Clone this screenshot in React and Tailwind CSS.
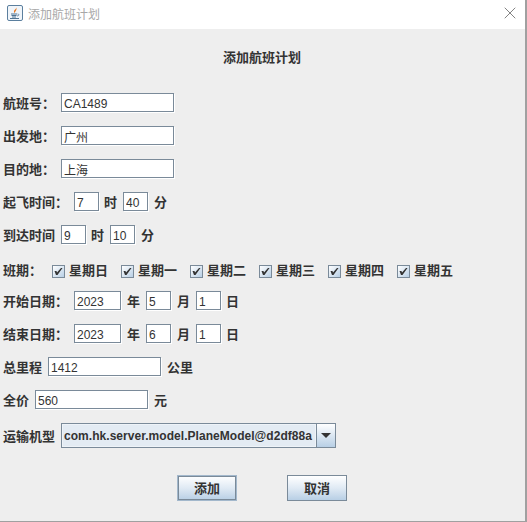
import { X } from "lucide-react";

const font = "font-['Liberation_Sans','Noto_Sans_CJK_SC',sans-serif]";

function Label({ children, className = "" }) {
  return <span className={`font-bold text-[13px] leading-[18px] text-[#333333] whitespace-nowrap ${className}`}>{children}</span>;
}

// labels next to text fields sit a little lower than the field's centre
function RowLabel({ children, className = "" }) {
  return <Label className={`pt-[2px] ${className}`}>{children}</Label>;
}

function Field({ value, className = "" }) {
  return (
    <input
      readOnly
      defaultValue={value}
      className={`h-[19px] px-[2px] pt-[2px] bg-white border border-[#7a8a99] shadow-[1px_1px_0_#ffffff] text-[12px] text-[#333333] outline-none ${className}`}
    />
  );
}

function DayCheck({ label }) {
  return (
    <label className="flex items-center gap-[4px] w-[69px] shrink-0">
      <span className="w-[13px] h-[13px] border border-[#7a8a99] bg-gradient-to-br from-[#ffffff] to-[#b8cfe5] flex items-center justify-center">
        <svg width="9" height="9" viewBox="0 0 9 9" aria-hidden="true">
          <path d="M0.5 4 L2.5 4 L3 5.5 L7 1 L8.5 1 L3.5 8 L2 8 Z" fill="#333333" />
        </svg>
      </span>
      <Label>{label}</Label>
    </label>
  );
}

function JavaIcon() {
  return (
    <svg width="16" height="16" viewBox="0 0 16 16" className="mb-[3px]" aria-hidden="true">
      <rect x="0.5" y="0.5" width="15" height="15" rx="1.5" fill="#f0f5fa" stroke="#5b7f9e" />
      <path d="M9 2 C10 4 6.5 5 7 6.8 C7.3 7.8 8 8.3 8 8.3 C7.2 6.6 10.8 5.5 9 2 Z" fill="#e8761e" />
      <path d="M4 9 H10 M4.5 10.5 H9.5 M5 12 H9" stroke="#4f7392" strokeWidth="1" />
      <path d="M10.5 9 C12.5 9 12.5 10.8 10 11" stroke="#4f7392" strokeWidth="0.8" fill="none" />
      <path d="M3 13.5 H12" stroke="#4f7392" strokeWidth="1" />
    </svg>
  );
}

function MetalButton({ children, focused }) {
  return (
    <button
      className={`w-[60px] h-[26px] pt-[2px] bg-gradient-to-b from-[#ffffff] via-[#e0eaf4] to-[#b8cfe5] font-bold text-[13px] text-[#333333] border ${
        focused ? "border-[#a3b8cc] shadow-[inset_0_0_0_1px_#7a8a99]" : "border-[#7a8a99]"
      }`}
    >
      {children}
    </button>
  );
}

const days = ["星期日", "星期一", "星期二", "星期三", "星期四", "星期五"];

export default function App() {
  return (
    <div className={`w-[527px] h-[522px] overflow-hidden flex flex-col bg-[#eeeeee] border-r-2 border-b border-[#a0a0a0] ${font}`}>
      <div className="h-[29px] shrink-0 bg-white flex items-center pl-[7px] pr-[5px]">
        <JavaIcon />
        <span className="ml-[5px] text-[12px] text-[#a8a8a8]">添加航班计划</span>
        <X className="ml-auto mb-[3px] w-[20px] h-[20px] text-[#777777]" strokeWidth={1.1} />
      </div>

      <div className="flex flex-col pl-[3px]">
        <div className="h-[18px] mt-[20px] flex justify-center pr-[4px]">
          <Label>添加航班计划</Label>
        </div>

        <div className="flex items-center mt-[26px] h-[19px]">
          <RowLabel className="w-[58px]">航班号：</RowLabel>
          <Field value="CA1489" className="w-[113px]" />
        </div>
        <div className="flex items-center mt-[14px] h-[19px]">
          <RowLabel className="w-[58px]">出发地：</RowLabel>
          <Field value="广州" className="w-[113px]" />
        </div>
        <div className="flex items-center mt-[14px] h-[19px]">
          <RowLabel className="w-[58px]">目的地：</RowLabel>
          <Field value="上海" className="w-[113px]" />
        </div>
        <div className="flex items-center mt-[14px] h-[19px]">
          <RowLabel className="w-[71px]">起飞时间：</RowLabel>
          <Field value="7" className="w-[25px]" />
          <RowLabel className="ml-[5px] w-[19px]">时</RowLabel>
          <Field value="40" className="w-[25px]" />
          <RowLabel className="ml-[6px]">分</RowLabel>
        </div>
        <div className="flex items-center mt-[14px] h-[19px]">
          <RowLabel className="w-[58px]">到达时间</RowLabel>
          <Field value="9" className="w-[25px]" />
          <RowLabel className="ml-[5px] w-[19px]">时</RowLabel>
          <Field value="10" className="w-[25px]" />
          <RowLabel className="ml-[6px]">分</RowLabel>
        </div>

        <div className="flex items-center mt-[18px] h-[18px]">
          <Label className="w-[49px]">班期：</Label>
          {days.map((d) => (
            <DayCheck key={d} label={d} />
          ))}
        </div>

        <div className="flex items-center mt-[11px] h-[19px]">
          <RowLabel className="w-[71px]">开始日期：</RowLabel>
          <Field value="2023" className="w-[47px]" />
          <RowLabel className="ml-[6px] w-[19px]">年</RowLabel>
          <Field value="5" className="w-[25px]" />
          <RowLabel className="ml-[6px] w-[19px]">月</RowLabel>
          <Field value="1" className="w-[25px]" />
          <RowLabel className="ml-[5px]">日</RowLabel>
        </div>
        <div className="flex items-center mt-[14px] h-[19px]">
          <RowLabel className="w-[71px]">结束日期：</RowLabel>
          <Field value="2023" className="w-[47px]" />
          <RowLabel className="ml-[6px] w-[19px]">年</RowLabel>
          <Field value="6" className="w-[25px]" />
          <RowLabel className="ml-[6px] w-[19px]">月</RowLabel>
          <Field value="1" className="w-[25px]" />
          <RowLabel className="ml-[5px]">日</RowLabel>
        </div>
        <div className="flex items-center mt-[14px] h-[19px]">
          <RowLabel className="w-[45px]">总里程</RowLabel>
          <Field value="1412" className="w-[113px]" />
          <RowLabel className="ml-[6px]">公里</RowLabel>
        </div>
        <div className="flex items-center mt-[14px] h-[19px]">
          <RowLabel className="w-[32px]">全价</RowLabel>
          <Field value="560" className="w-[113px]" />
          <RowLabel className="ml-[6px]">元</RowLabel>
        </div>

        <div className="flex items-center mt-[14px] h-[25px]">
          <RowLabel className="w-[58px]">运输机型</RowLabel>
          <div className="flex h-[25px] w-[275px] border border-[#7a8a99]">
            <div className="flex-1 min-w-0 flex items-center pl-[1px] bg-[#e3ebf3] border border-[#eef3f8] font-bold text-[12px] tracking-[0.04px] text-[#333333] whitespace-nowrap overflow-hidden">
              com.hk.server.model.PlaneModel@d2df88a
            </div>
            <div className="w-[19px] shrink-0 flex items-center justify-center border-l border-[#7a8a99] bg-gradient-to-b from-[#ffffff] to-[#b8cfe5]">
              <span className="w-0 h-0 border-x-[5px] border-x-transparent border-t-[5px] border-t-[#333333]" />
            </div>
          </div>
        </div>

        <div className="flex mt-[27px] pl-[174px] gap-[50px]">
          <MetalButton focused>添加</MetalButton>
          <MetalButton>取消</MetalButton>
        </div>
      </div>
    </div>
  );
}
